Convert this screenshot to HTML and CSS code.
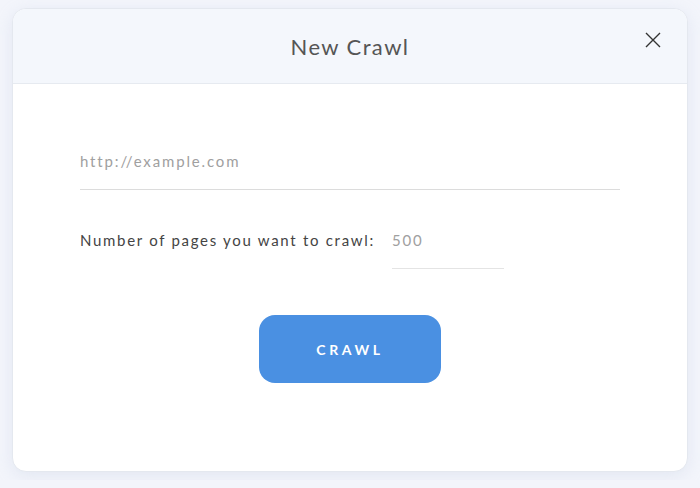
FILE: index.html
```html
<!DOCTYPE html>
<html lang="en">
<head>
<meta charset="UTF-8">
<meta name="viewport" content="width=device-width, initial-scale=1.0">
<title>New Crawl</title>
<link rel="stylesheet" href="styles.css">
</head>
<body>

<div class="modal">
  <header class="modal-header">
    <h2>New Crawl</h2>
    <button class="close" aria-label="Close">
      <svg width="16" height="16" viewBox="0 0 16 16">
        <path d="M1 1 L15 15 M15 1 L1 15" stroke="#333" stroke-width="1.4" fill="none"/>
      </svg>
    </button>
  </header>

  <form class="modal-body">
    <input type="text" class="url-input" placeholder="http://example.com">
    <div class="pages-row">
      <label for="pages">Number of pages you want to crawl:</label>
      <input type="text" id="pages" class="pages-input" placeholder="500">
    </div>
    <button type="submit" class="crawl-btn">CRAWL</button>
  </form>
</div>

</body>
</html>
```

FILE: styles.css
```css
:root {
  --primary: #4a90e2;
  --page-bg: #f3f5fb;
  --header-bg: #f4f7fc;
  --line: #dcdcdc;
  --text: #444;
}

body {
  margin: 0;
  font-family: Lato, 'Open Sans', sans-serif;
  background: var(--page-bg);
  color: var(--text);
}

.modal {
  margin: 8px 12px;
  height: 464px;
  background: white;
  border: 1px solid #e4e8ef;
  border-radius: 14px;
  box-shadow: 0 4px 16px rgba(180, 190, 220, 0.25);
  overflow: hidden;
  box-sizing: border-box;
}

.modal-header {
  position: relative;
  height: 74px;
  background: var(--header-bg);
  border-bottom: 1px solid #e6eaf0;
  display: flex;
  align-items: center;
  justify-content: center;
}

.modal-header h2 {
  margin: 0;
  font-size: 22px;
  font-weight: 400;
  color: #555;
  letter-spacing: 1.4px;
}

.close {
  position: absolute;
  right: 26px;
  top: 23px;
  background: none;
  border: none;
  padding: 0;
  width: 16px;
  height: 16px;
  cursor: pointer;
}

.close svg {
  display: block;
}

.modal-body {
  padding: 57px 67px 0;
  display: flex;
  flex-direction: column;
}

.modal-body input {
  font-family: inherit;
  font-size: 15px;
  letter-spacing: 1.85px;
  line-height: 20px;
  height: 49px;
  padding: 10px 0 19px;
  border: none;
  border-bottom: 1px solid var(--line);
  outline: none;
  color: var(--text);
  background: transparent;
  box-sizing: border-box;
}

.modal-body input::placeholder {
  color: #a0a0a0;
}

.url-input {
  width: 100%;
}

.pages-row {
  display: flex;
  gap: 17px;
  margin-top: 30px;
}

.pages-row label {
  padding-top: 10px;
  line-height: 20px;
  font-size: 15px;
  letter-spacing: 1.7px;
  color: var(--text);
}

.pages-input {
  width: 112px;
  border-bottom-color: #e4e4e4 !important;
}

.crawl-btn {
  align-self: center;
  margin-top: 46px;
  width: 182px;
  height: 68px;
  border: none;
  border-radius: 16px;
  background: var(--primary);
  color: white;
  font-family: inherit;
  font-size: 14px;
  font-weight: 700;
  letter-spacing: 3.6px;
  cursor: pointer;
}
```
